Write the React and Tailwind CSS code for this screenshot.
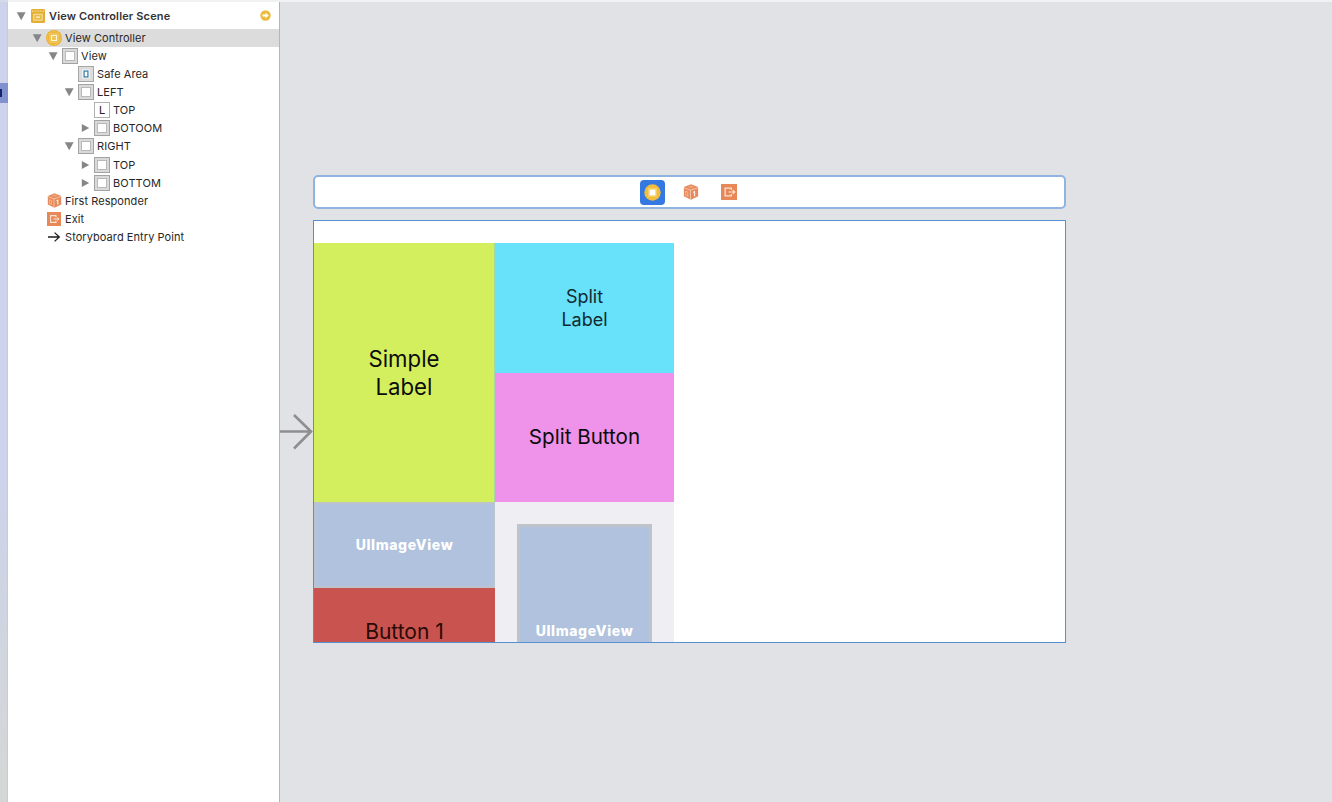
import React from "react";

function SceneIcon() {
  return (
    <svg width="14" height="14" viewBox="0 0 14 14">
      <rect width="14" height="14" rx="1.2" fill="#e2ae35" />
      <path d="M1 2.2h12" stroke="#f7dc8c" strokeWidth="1.2" strokeDasharray="1.6 1" />
      <rect x="2.8" y="5.2" width="8.4" height="6" fill="#e8bb50" stroke="#fae6a6" strokeWidth="0.9" />
      <path d="M5 8.2h4" stroke="#fae6a6" strokeWidth="1.6" />
    </svg>
  );
}

function ControllerIcon() {
  return (
    <svg width="16" height="16" viewBox="0 0 16 16">
      <circle cx="8" cy="8" r="8" fill="#eab234" />
      <circle cx="8" cy="8" r="6.5" fill="none" stroke="#f3cb62" strokeWidth="0.6" />
      <rect x="3.6" y="3.6" width="8.8" height="8.8" fill="none" stroke="#f5d272" strokeWidth="0.6" />
      <rect x="5.4" y="5.4" width="5.2" height="5.2" fill="#f3c44f" stroke="#fff6d8" strokeWidth="1.3" />
    </svg>
  );
}

function ViewIcon() {
  return (
    <svg width="16" height="16" viewBox="0 0 16 16">
      <rect x="0.5" y="0.5" width="15" height="15" fill="#d9d9d9" stroke="#a3a3a3" />
      <rect x="3.5" y="3.5" width="9" height="9" fill="#fff" stroke="#b9b9b9" />
    </svg>
  );
}

function SafeAreaIcon() {
  return (
    <svg width="16" height="16" viewBox="0 0 16 16">
      <rect x="0.5" y="0.5" width="15" height="15" fill="#dcdcdc" stroke="#a6a6a6" />
      <rect x="4" y="3.5" width="8" height="9" fill="#edf2f5" />
      <rect x="6.1" y="5.1" width="3.8" height="5.8" fill="#fff" stroke="#3c7ba4" strokeWidth="1.2" />
    </svg>
  );
}

function LabelIcon() {
  return (
    <div className="flex size-4 items-center justify-center border border-[#b0b0b0] bg-white text-[11px] leading-none text-[#222]">
      L
    </div>
  );
}

function CubeIcon({ size = 15 }) {
  return (
    <svg width={size} height={size} viewBox="0 0 15 15">
      <path d="M7.5 0.3 14.2 2.9v8.6L7.5 14.7 0.8 11.5V2.9Z" fill="#e78a5b" />
      <path d="M0.8 3.5 7 5.8l7.2-2.4M7 5.8v8.6" stroke="#fbd9c6" strokeWidth="0.7" fill="none" />
      <path d="M2.5 6.7v3.9l2 0.9V7.5Z" fill="none" stroke="#f6c7ae" strokeWidth="0.7" />
      <path d="M9.6 8l1.2-0.8v4.4" fill="none" stroke="#fff0e7" strokeWidth="1.1" />
      <path d="M4.2 2.7l3.5-1.3 3.2 1.2-3.5 1.2Z" fill="#f0a47d" />
    </svg>
  );
}

function ExitIcon({ size = 14 }) {
  return (
    <svg width={size} height={size} viewBox="0 0 14 14">
      <rect width="14" height="14" fill="#e88858" />
      <path d="M9 5.2V3.6H3.6v6.8H9V8.8" fill="none" stroke="#fce3d5" strokeWidth="1.1" />
      <path d="M6.6 7h5.2M10.3 5.5 12 7l-1.7 1.5" fill="none" stroke="#fce3d5" strokeWidth="1" />
    </svg>
  );
}

function EntryIcon() {
  return (
    <svg width="14" height="12" viewBox="0 0 14 12">
      <path d="M1 6h11.3M7.6 1.6 12.3 6 7.6 10.4" fill="none" stroke="#1d1d1d" strokeWidth="1.3" />
    </svg>
  );
}

function Disclosure({ open }) {
  return (
    <svg width="10" height="10" viewBox="0 0 10 10">
      <path d={open ? "M0.8 1.2h8.8L5.2 9.2Z" : "M1.8 0.9v8.2L9.2 5Z"} fill="#868686" />
    </svg>
  );
}

const rows = [
  { label: "View", pad: "pl-[40px]", open: true, icon: <ViewIcon /> },
  { label: "Safe Area", pad: "pl-[56px]", icon: <SafeAreaIcon /> },
  { label: "LEFT", pad: "pl-[56px]", open: true, icon: <ViewIcon /> },
  { label: "TOP", pad: "pl-[72px]", icon: <LabelIcon /> },
  { label: "BOTOOM", pad: "pl-[72px]", open: false, icon: <ViewIcon /> },
  { label: "RIGHT", pad: "pl-[56px]", open: true, icon: <ViewIcon /> },
  { label: "TOP", pad: "pl-[72px]", open: false, icon: <ViewIcon /> },
  { label: "BOTTOM", pad: "pl-[72px]", open: false, icon: <ViewIcon /> },
  { label: "First Responder", pad: "pl-[24px]", icon: <CubeIcon /> },
  { label: "Exit", pad: "pl-[24px]", icon: <ExitIcon /> },
  { label: "Storyboard Entry Point", pad: "pl-[24px]", icon: <EntryIcon /> },
];

function Row({ label, pad, open, icon }) {
  return (
    <div className={`flex h-[18.08px] shrink-0 items-center ${pad}`}>
      <div className="flex w-[14px] shrink-0 items-center">{open !== undefined && <Disclosure open={open} />}</div>
      <div className="flex w-4 shrink-0 items-center justify-center">{icon}</div>
      <span className="ml-[3px] tracking-[0.07px] whitespace-nowrap">{label}</span>
    </div>
  );
}

function Outline() {
  return (
    <aside className="flex w-[272px] shrink-0 flex-col border-r border-[#b4b6b7] bg-white text-[11px] leading-[18px] text-[#272727]">
      <div className="flex h-[27px] shrink-0 items-center pl-[8px]">
        <Disclosure open />
        <span className="ml-[5px]"><SceneIcon /></span>
        <span className="ml-[4px] font-semibold tracking-[0.15px] text-[#333]">View Controller Scene</span>
        <svg className="mr-[8px] ml-auto" width="11" height="11" viewBox="0 0 11 11">
          <circle cx="5.5" cy="5.5" r="5.2" fill="#ecbb3c" />
          <path d="M2.5 4.5h3V2.7L8.8 5.5 5.5 8.3V6.5h-3Z" fill="#fff" />
        </svg>
      </div>
      <div className="flex h-[18px] shrink-0 items-center bg-[#dcdcdc] pl-[24px]">
        <div className="flex w-[14px] shrink-0"><Disclosure open /></div>
        <ControllerIcon />
        <span className="ml-[3px] tracking-[0.07px]">View Controller</span>
      </div>
      {rows.map((row, i) => <Row key={i} {...row} />)}
    </aside>
  );
}

function SceneDock() {
  return (
    <div className="flex h-[34px] w-[753px] items-center rounded-[5px] border-2 border-[#8fb4e0] bg-white pl-[325px]">
      <div className="flex size-[25px] items-center justify-center rounded-[4px] bg-[#3478e2]">
        <svg width="17" height="17" viewBox="0 0 17 17">
          <circle cx="8.5" cy="8.5" r="8.2" fill="#f0bd3c" />
          <rect x="4" y="4" width="9" height="9" fill="#f5cd62" />
          <rect x="5.6" y="5.6" width="5.8" height="5.8" fill="#fff" />
        </svg>
      </div>
      <span className="ml-[18px]"><CubeIcon size={16} /></span>
      <span className="ml-[22px]"><ExitIcon size={16} /></span>
    </div>
  );
}

function Device() {
  return (
    <div className="mt-[11px] flex h-[423px] w-[753px] overflow-hidden border border-[#5590d2] bg-white pt-[22px] text-[#0c0c0c]">
      <div className="flex w-[181px] shrink-0 flex-col">
        <div className="flex h-[258.5px] shrink-0 items-center justify-center border-r border-[#a3dc9b] bg-[#d4ef5e] pt-[2px] text-center text-[22.2px] leading-[28px]">
          <span>Simple<br />Label</span>
        </div>
        <div className="flex h-[86.5px] shrink-0 items-center justify-center border-2 border-[#bdc3cd] bg-[#b0c2dd] text-[14px] font-extrabold tracking-[0.62px] text-white">
          UIImageView
        </div>
        <div className="flex h-[87px] shrink-0 items-center justify-center bg-[#c9544f] text-[21px] text-[#2a0906]">
          Button 1
        </div>
      </div>
      <div className="flex w-[179px] shrink-0 flex-col bg-[#efeef3]">
        <div className="flex h-[130px] shrink-0 items-center justify-center bg-[#68e1fb] pt-px text-center text-[18px] leading-[22.5px] text-[#102a31]">
          <span>Split<br />Label</span>
        </div>
        <div className="flex h-[128.5px] shrink-0 items-center justify-center bg-[#ef92e9] pt-px text-[20.6px]">
          Split Button
        </div>
        <div className="mx-[22px] mt-[22.5px] flex h-[213px] shrink-0 items-center justify-center border-[3px] border-[#bfc3ca] bg-[#b0c2dd] text-[14px] font-extrabold tracking-[0.62px] text-white">
          UIImageView
        </div>
      </div>
    </div>
  );
}

export default function App() {
  return (
    <div className="flex h-[802px] w-[1332px] flex-col overflow-hidden bg-[#e1e2e6] font-['Inter','Liberation_Sans',sans-serif]">
      <div className="flex h-[2px] shrink-0">
        <div className="w-[8px] bg-[#d6daeb]" />
        <div className="flex-1 bg-[#f0f1f2]" />
      </div>
      <div className="flex min-h-0 flex-1">
        <div className="w-[8px] shrink-0 border-r border-[#c6cbd8] bg-linear-to-b from-[#cdd3ea] from-60% via-[#d1d5df] via-80% to-[#d5d7d5] pt-[81px]">
          <div className="flex h-[20px] w-[8px] items-center bg-[#8190cf]">
            <div className="h-[8px] w-[2px] bg-[#17246c]" />
          </div>
        </div>
        <Outline />
        <main className="flex flex-1 pt-[173px]">
          <svg className="mt-[237px] shrink-0" width="33" height="40" viewBox="0 0 33 40">
            <path d="M0 19.5h31M14 3l17 16.5L14 36.5" fill="none" stroke="#8e8e90" strokeWidth="2.6" />
          </svg>
          <div>
            <SceneDock />
            <Device />
          </div>
        </main>
      </div>
    </div>
  );
}
